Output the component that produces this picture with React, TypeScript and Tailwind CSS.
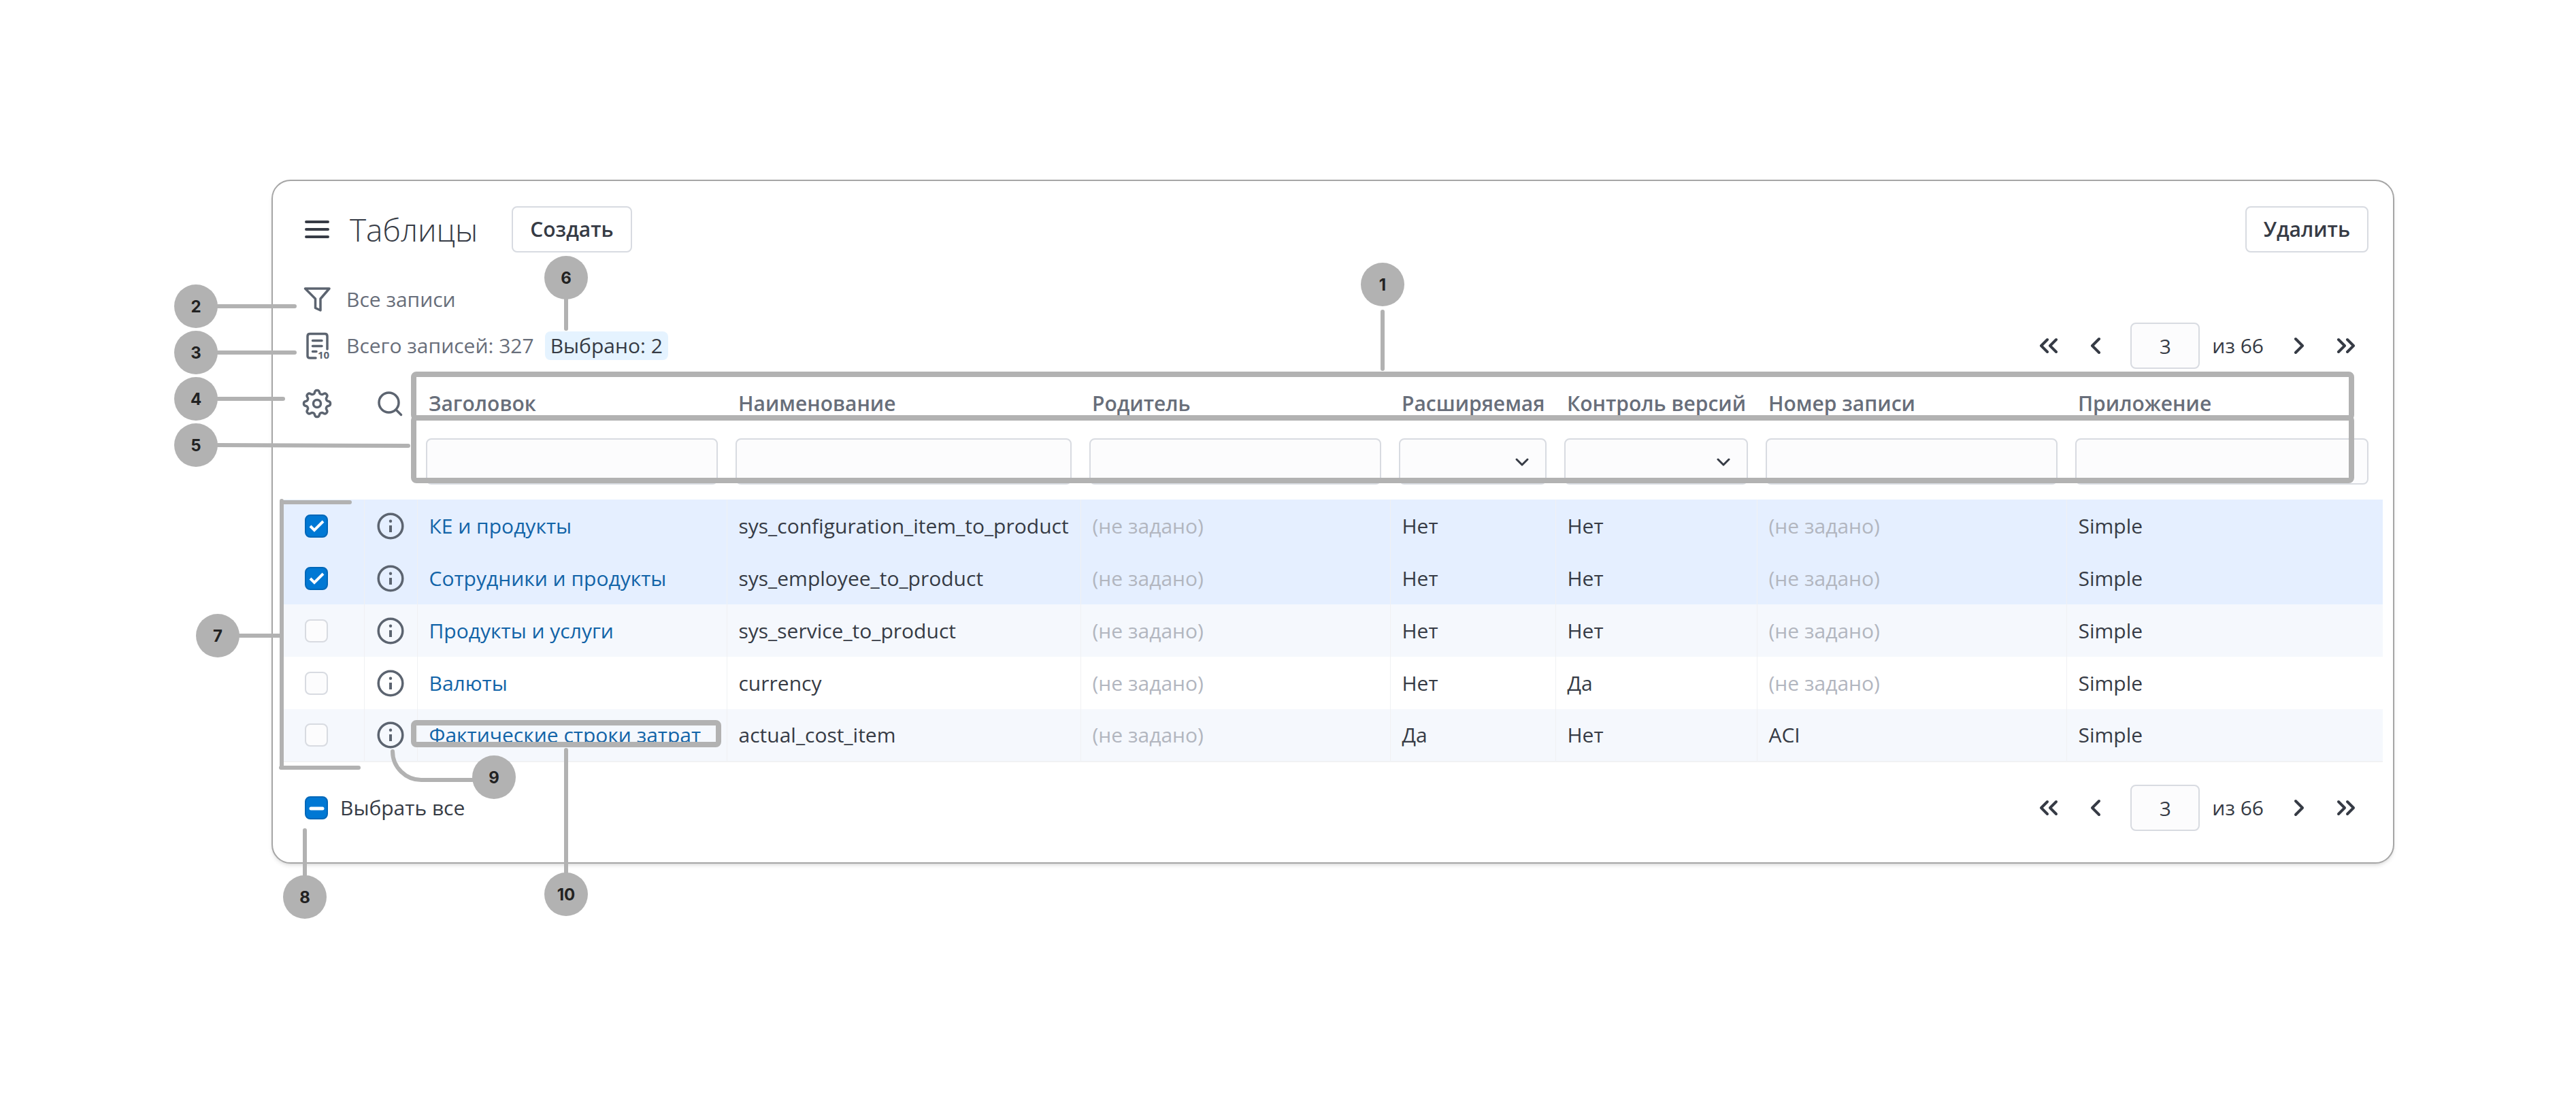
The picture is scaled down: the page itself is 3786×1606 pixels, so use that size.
import { useEffect, useRef, useState } from "react";

type Row = {
  title: string;
  name: string;
  parent: string | null;
  extendable: string;
  versioned: string;
  number: string | null;
  app: string;
};

const rows: Row[] = [
  { title: "КЕ и продукты", name: "sys_configuration_item_to_product", parent: null, extendable: "Нет", versioned: "Нет", number: null, app: "Simple" },
  { title: "Сотрудники и продукты", name: "sys_employee_to_product", parent: null, extendable: "Нет", versioned: "Нет", number: null, app: "Simple" },
  { title: "Продукты и услуги", name: "sys_service_to_product", parent: null, extendable: "Нет", versioned: "Нет", number: null, app: "Simple" },
  { title: "Валюты", name: "currency", parent: null, extendable: "Нет", versioned: "Да", number: null, app: "Simple" },
  { title: "Фактические строки затрат", name: "actual_cost_item", parent: null, extendable: "Да", versioned: "Нет", number: "ACI", app: "Simple" },
];

const columns = [
  { label: "Заголовок", select: false },
  { label: "Наименование", select: false },
  { label: "Родитель", select: false },
  { label: "Расширяемая", select: true },
  { label: "Контроль версий", select: true },
  { label: "Номер записи", select: false },
  { label: "Приложение", select: false },
];

// numbered callouts: centre of each badge
const badges = [
  { n: 1, x: 2032, y: 418 },
  { n: 2, x: 288, y: 450 },
  { n: 3, x: 288, y: 518 },
  { n: 4, x: 288, y: 586 },
  { n: 5, x: 288, y: 654 },
  { n: 6, x: 832, y: 408 },
  { n: 7, x: 320, y: 934 },
  { n: 8, x: 448, y: 1318 },
  { n: 9, x: 726, y: 1142 },
  { n: 10, x: 832, y: 1314 },
];

// eight rounded teeth around the centre of a 44px box
const gearPath =
  Array.from({ length: 180 }, (_, i) => {
    const a = (i * Math.PI) / 90;
    const r = 17.2 + 2.3 * (Math.tanh(1.6 * Math.cos(8 * a)) / Math.tanh(1.6));
    return `${i === 0 ? "M" : "L"}${(22 + r * Math.sin(a)).toFixed(2)} ${(22 - r * Math.cos(a)).toFixed(2)}`;
  }).join("") + "Z";

function MenuIcon() {
  return (
    <svg className="h-[36px] w-[36px]" viewBox="0 0 36 36" fill="none" stroke="#363b45" strokeWidth="4" strokeLinecap="round">
      <path d="M2 7H34M2 18H34M2 29H34" />
    </svg>
  );
}

function FilterIcon() {
  return (
    <svg className="h-[42px] w-[42px]" viewBox="0 0 42 42" fill="none" stroke="#5c6470" strokeWidth="3.5" strokeLinejoin="round">
      <path d="M3.5 5H39L26 20V37L18.5 33.5V20Z" />
    </svg>
  );
}

function RecordsIcon() {
  return (
    <svg className="h-[46px] w-[44px]" viewBox="0 0 44 46" fill="none" stroke="#5c6470" strokeWidth="3.5" strokeLinecap="round">
      <path d="M36 28V9Q36 5.5 32.5 5.5H10.5Q7 5.5 7 9V38Q7 41 10.5 41H19" />
      <path d="M14.5 15.5H28M14.5 23.5H28M14.5 31.5H20" />
      <text x="22" y="42" fontSize="15" fontWeight="700" fill="#5c6470" stroke="none">
        10
      </text>
    </svg>
  );
}

function GearIcon() {
  return (
    <svg className="h-[44px] w-[44px]" viewBox="0 0 44 44" fill="none" stroke="#5c6470" strokeWidth="3.5" strokeLinejoin="round">
      <path d={gearPath} />
      <circle cx="22" cy="22" r="5.5" />
    </svg>
  );
}

function SearchIcon() {
  return (
    <svg className="h-[40px] w-[40px]" viewBox="0 0 40 40" fill="none" stroke="#5c6470" strokeWidth="3.5" strokeLinecap="round">
      <circle cx="18.5" cy="18.5" r="14.5" />
      <path d="M29 29L36.5 36.5" />
    </svg>
  );
}

function InfoIcon() {
  return (
    <svg className="h-[40px] w-[40px]" viewBox="0 0 40 40" fill="none" stroke="#5c6470" strokeWidth="3.5">
      <circle cx="20" cy="20" r="17.8" />
      <circle cx="20" cy="12.8" r="2.2" fill="#5c6470" stroke="none" />
      <path d="M20 19V29" strokeWidth="4" />
    </svg>
  );
}

function Chevron({ d }: { d: string }) {
  return (
    <svg className="h-[32px] w-[32px]" viewBox="0 0 32 32" fill="none" stroke="#363b45" strokeWidth="4" strokeLinecap="round" strokeLinejoin="round">
      <path d={d} />
    </svg>
  );
}

function Checkbox({ id, label, checked, partial, onChange }: { id: string; label: string; checked: boolean; partial?: boolean; onChange: () => void }) {
  const ref = useRef<HTMLInputElement>(null);

  useEffect(() => {
    if (ref.current) ref.current.indeterminate = !!partial;
  }, [partial]);

  return (
    <span className="relative block h-[34px] w-[34px]">
      <input
        ref={ref}
        id={id}
        type="checkbox"
        aria-label={label}
        checked={checked}
        onChange={onChange}
        className="block h-full w-full appearance-none rounded-lg border-2 border-[#d8dbe1] bg-[#fcfcfd] checked:border-[#0067b8] checked:bg-[#0078d4] indeterminate:border-[#0067b8] indeterminate:bg-[#0078d4]"
      />
      <svg className="pointer-events-none absolute inset-0" viewBox="0 0 34 34" fill="none" stroke="#ffffff" strokeWidth="4">
        {partial ? <path d="M9 18H26" strokeWidth="5" strokeLinecap="round" /> : checked ? <path d="M8 17L14 23L27 10" /> : null}
      </svg>
    </span>
  );
}

function Pager() {
  return (
    <nav className="flex items-center text-[#363b45]">
      <button aria-label="Первая страница" className="mr-9">
        <Chevron d="M14 7L5 16L14 25M27 7L18 16L27 25" />
      </button>
      <button aria-label="Назад" className="mr-9">
        <Chevron d="M22 6L12 16L22 26" />
      </button>
      <input aria-label="Страница" defaultValue="3" className="h-[68px] w-[102px] rounded-lg border-2 border-[#d8dbe1] bg-[#fcfcfd] text-center" />
      <span className="mr-[37px] ml-[18px]">из 66</span>
      <button aria-label="Вперёд" className="mr-9">
        <Chevron d="M10 6L20 16L10 26" />
      </button>
      <button aria-label="Последняя страница">
        <Chevron d="M5 7L14 16L5 25M18 7L27 16L18 25" />
      </button>
    </nav>
  );
}

function Callouts() {
  return (
    <svg className="pointer-events-none absolute left-0 top-0 h-[1606px] w-[3786px]" viewBox="0 0 3786 1606" fill="none" stroke="#b2b2b2" strokeWidth="6" strokeLinecap="round">
      <rect x="608" y="550" width="2848" height="64" rx="4" strokeWidth="8" />
      <rect x="608" y="614" width="2848" height="92" rx="4" strokeWidth="8" />
      <rect x="608" y="1062" width="448" height="32" rx="4" strokeWidth="8" />
      <path d="M2032 458V542M832 440V483M320 450H433M320 518H433M320 586H416M320 654L600 655" />
      <path d="M352 934H414M414 736V1128M414 738H514M413 1128H527" />
      <path d="M448 1286V1220M832 1282V1102M694 1146H619C597 1146 577 1128 577 1104" />
      {badges.map((b) => (
        <g key={b.n}>
          <circle cx={b.x} cy={b.y} r="32" fill="#b2b2b2" stroke="none" />
          <text x={b.x} y={b.y + 9} textAnchor="middle" fill="#222222" stroke="none" className="font-['Inter',sans-serif] text-[24px] font-bold">
            {b.n}
          </text>
        </g>
      ))}
    </svg>
  );
}

export default function App() {
  const [selected, setSelected] = useState<number[]>([0, 1]);
  const all = selected.length === rows.length;

  const toggle = (i: number) => {
    setSelected(selected.includes(i) ? selected.filter((s) => s !== i) : [...selected, i]);
  };

  const cell = (value: string | null) => (value === null ? <span className="text-[#b2b6bf]">(не задано)</span> : value);

  return (
    <div className="relative min-h-screen bg-white pt-[264px] pr-[267px] pb-20 pl-[399px] font-['Open_Sans','Noto_Sans',sans-serif] text-[30px] leading-[42px] text-[#363b45]">
      <main className="rounded-[28px] border-2 border-[#a6a6a6] bg-white pt-[37px] pr-[15px] pb-[46px] pl-4 shadow-md">
        <header className="flex h-[68px] items-center pr-[21px] pl-[31px]">
          <button aria-label="Меню">
            <MenuIcon />
          </button>
          <h1 className="ml-[30px] text-[46px] leading-[60px] font-light">Таблицы</h1>
          <button className="ml-[50px] h-[68px] rounded-lg border-2 border-[#d8dbe1] px-[25px] font-semibold">Создать</button>
          <button className="ml-auto h-[68px] rounded-lg border-2 border-[#d8dbe1] px-[25px] font-semibold">Удалить</button>
        </header>

        <div className="mt-[48px] flex items-center pl-7 text-[#686e7a]">
          <button aria-label="Фильтр">
            <FilterIcon />
          </button>
          <span className="ml-[22px]">Все записи</span>
        </div>

        <div className="mt-[13px] flex h-[68px] items-center pr-[38px] pl-7 text-[#686e7a]">
          <RecordsIcon />
          <span className="ml-5">Всего записей: 327</span>
          <span className="ml-4 rounded-lg bg-[#e5f3ff] px-2 text-[#363b45]">Выбрано: 2</span>
          <div className="ml-auto">
            <Pager />
          </div>
        </div>

        <table className="w-full table-fixed border-collapse text-left">
          <colgroup>
            <col className="w-[118px]" />
            <col className="w-[78px]" />
            <col className="w-[455px]" />
            <col className="w-[520px]" />
            <col className="w-[455px]" />
            <col className="w-[243px]" />
            <col className="w-[296px]" />
            <col className="w-[455px]" />
            <col className="w-[465px]" />
          </colgroup>
          <thead>
            <tr className="h-[102px] text-[#686e7a]">
              <th className="pl-[27px]">
                <button aria-label="Настройки" className="block">
                  <GearIcon />
                </button>
              </th>
              <th className="pl-[18px]">
                <button aria-label="Поиск" className="block">
                  <SearchIcon />
                </button>
              </th>
              {columns.map((c) => (
                <th key={c.label} className="pl-[17px] font-semibold whitespace-nowrap">
                  {c.label}
                </th>
              ))}
            </tr>
            <tr className="h-[90px] align-top">
              <td />
              <td />
              {columns.map((c) => (
                <td key={c.label} className="px-[13px] last:pr-[21px]">
                  {c.select ? (
                    <div className="relative">
                      <select aria-label={c.label} className="block h-[68px] w-full appearance-none rounded-lg border-2 border-[#d8dbe1] bg-[#fcfcfd]" />
                      <svg className="pointer-events-none absolute top-[22px] right-6 h-6 w-6" viewBox="0 0 24 24" fill="none" stroke="#363b45" strokeWidth="3" strokeLinecap="round" strokeLinejoin="round">
                        <path d="M4 9L12 17L20 9" />
                      </svg>
                    </div>
                  ) : (
                    <input aria-label={c.label} className="block h-[68px] w-full rounded-lg border-2 border-[#d8dbe1] bg-[#fcfcfd]" />
                  )}
                </td>
              ))}
            </tr>
          </thead>
          <tbody className="border-b-2 border-[#f1f2f4]">
            {rows.map((r, i) => (
              <tr
                key={r.name}
                className={selected.includes(i) ? "h-[77px] bg-[#e5efff]" : i % 2 === 0 ? "h-[77px] bg-[#f5f8fd]" : "h-[77px]"}
              >
                <td className="pl-[31px]">
                  <Checkbox id={`row-${i}`} label={r.title} checked={selected.includes(i)} onChange={() => toggle(i)} />
                </td>
                <td className="border-x border-[#f0f1f3] pl-[18px]">
                  <button aria-label="Информация" className="block">
                    <InfoIcon />
                  </button>
                </td>
                <td className="pl-[17px] whitespace-nowrap">
                  <a href="#" className="text-[#1264a8]">
                    {r.title}
                  </a>
                </td>
                <td className="border-l border-[#f0f1f3] pl-[17px]">{r.name}</td>
                <td className="border-l border-[#f0f1f3] pl-[17px]">{cell(r.parent)}</td>
                <td className="border-l border-[#f0f1f3] pl-[17px]">{r.extendable}</td>
                <td className="border-l border-[#f0f1f3] pl-[17px]">{r.versioned}</td>
                <td className="border-l border-[#f0f1f3] pl-[17px]">{cell(r.number)}</td>
                <td className="border-l border-[#f0f1f3] pl-[17px]">{r.app}</td>
              </tr>
            ))}
          </tbody>
        </table>

        <footer className="mt-[33px] flex items-center pr-[38px] pl-[31px]">
          <Checkbox
            id="select-all"
            label="Выбрать все"
            checked={all}
            partial={selected.length > 0 && !all}
            onChange={() => setSelected(all ? [] : rows.map((_, i) => i))}
          />
          <label htmlFor="select-all" className="ml-[18px]">
            Выбрать все
          </label>
          <div className="ml-auto">
            <Pager />
          </div>
        </footer>
      </main>
      <Callouts />
    </div>
  );
}
